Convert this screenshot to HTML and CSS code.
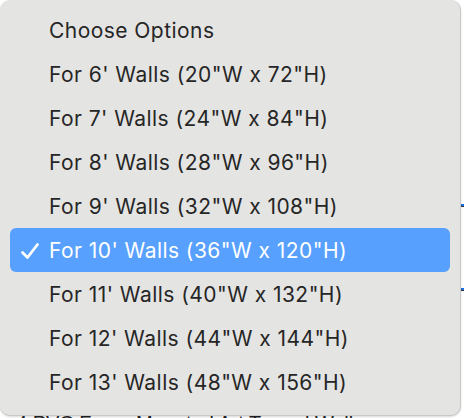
FILE: index.html
```html
<!DOCTYPE html>
<html>
<head>
<meta charset="utf-8">
<link rel="stylesheet" href="styles.css">
</head>
<body>
<div class="page">
  <div class="rule rule-a"></div>
  <div class="rule rule-b"></div>
  <div class="under">4 PVC Foam Mounted Art Tunnel Walls</div>
</div>
<div class="menu">
  <div class="item">Choose Options</div>
  <div class="item">For 6' Walls (20"W x 72"H)</div>
  <div class="item">For 7' Walls (24"W x 84"H)</div>
  <div class="item">For 8' Walls (28"W x 96"H)</div>
  <div class="item">For 9' Walls (32"W x 108"H)</div>
  <div class="item selected"><svg class="check" viewBox="0 0 20 18" width="20" height="18"><path d="M2.5 10.5 L7.5 15.5 L17.5 2.5" fill="none" stroke="#fff" stroke-width="2.8" stroke-linecap="round" stroke-linejoin="round"/></svg>For 10' Walls (36"W x 120"H)</div>
  <div class="item">For 11' Walls (40"W x 132"H)</div>
  <div class="item">For 12' Walls (44"W x 144"H)</div>
  <div class="item">For 13' Walls (48"W x 156"H)</div>
</div>
</body>
</html>
```
FILE: styles.css
```css
html, body {
  margin: 0;
  padding: 0;
  background: #ffffff;
  width: 464px;
  height: 418px;
  overflow: hidden;
}
.page {
  position: relative;
  width: 464px;
  height: 418px;
}
.rule {
  position: absolute;
  left: 455px;
  width: 20px;
  height: 2px;
  background: #1a6fe0;
  border-bottom: 1px solid #333;
}
.rule-a { top: 204px; }
.rule-b { top: 288px; }
.under {
  position: absolute;
  left: 16px;
  top: 411px;
  font-family: "Liberation Sans", Arial, sans-serif;
  font-size: 20px;
  line-height: 24px;
  color: #222;
  white-space: nowrap;
}
.menu {
  position: absolute;
  top: 0;
  left: 0;
  box-sizing: border-box;
  width: 461px;
  height: 416px;
  padding: 8px 10px 11px 10px;
  background: #e4e4e3;
  border: 1px solid #c9c9c8;
  border-top: none;
  border-left: none;
  border-radius: 10px;
  box-shadow: 0 1px 2px rgba(0,0,0,0.15);
  display: flex;
  flex-direction: column;
  font-family: Inter, "Liberation Sans", Arial, sans-serif;
}
.item {
  height: 44px;
  display: flex;
  align-items: center;
  padding-left: 39px;
  font-size: 21px;
  color: #262626;
  white-space: nowrap;
  position: relative;
  border-radius: 6px;
  letter-spacing: 0.45px;
}
.item.selected {
  background: #58a0fe;
  color: #ffffff;
}
.check {
  position: absolute;
  left: 10px;
  top: 14px;
}
```
